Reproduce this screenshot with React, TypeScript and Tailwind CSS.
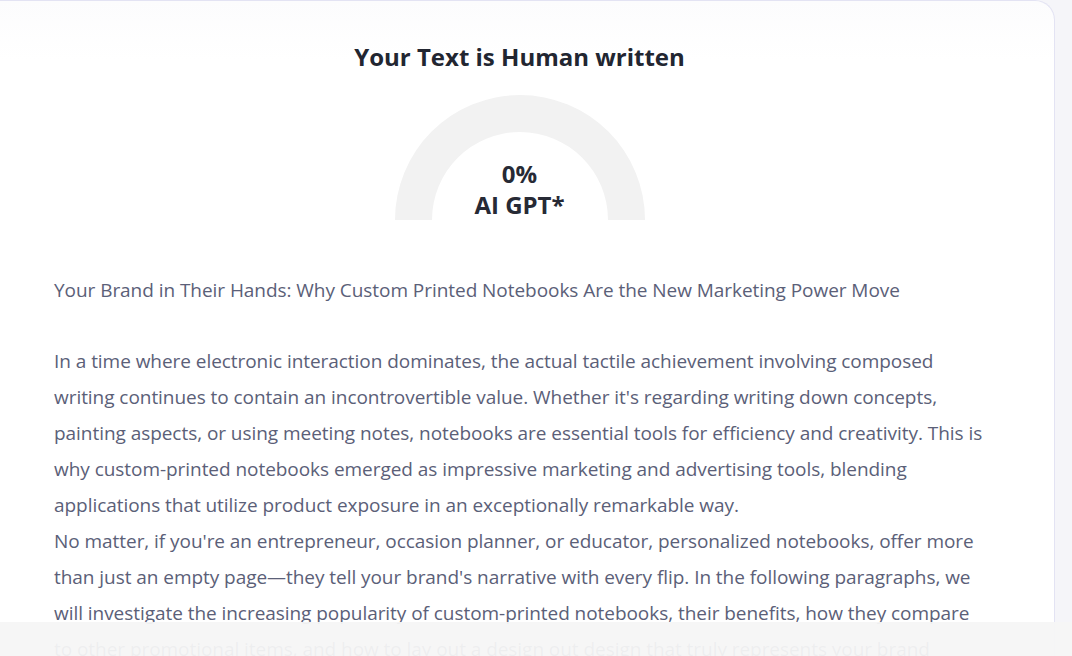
export default function App() {
  const p1 =
    "In a time where electronic interaction dominates, the actual tactile achievement involving composed writing continues to contain an incontrovertible value. Whether it's regarding writing down concepts, painting aspects, or using meeting notes, notebooks are essential tools for efficiency and creativity. This is why custom-printed notebooks emerged as impressive marketing and advertising tools, blending applications that utilize product exposure in an exceptionally remarkable way.";
  const p2 =
    "No matter, if you're an entrepreneur, occasion planner, or educator, personalized notebooks, offer more than just an empty page\u2014they tell your brand's narrative with every flip. In the following paragraphs, we will investigate the increasing popularity of custom-printed notebooks, their benefits, how they compare to other promotional items, and how to lay out a design out design that truly represents your brand identity.";
  return (
    <div
      className="relative h-[656px] w-[1072px] overflow-hidden bg-[#f5f5f9]"
      style={{ fontFamily: "'Open Sans', 'Noto Sans', sans-serif" }}
    >
      <div className="ml-[-20px] mr-[17px] h-[700px] rounded-tr-[20px] border-t border-r border-[#e3e3f3] bg-white bg-gradient-to-b from-[#fcfcfd] to-white to-[60px] pl-[74px] pt-[40px]">
        <div className="flex w-[931px] flex-col items-center">
          <h1 className="text-[24px] font-bold leading-[32px] text-[#222631]">
            Your Text is Human written
          </h1>
          <div className="relative mt-[22px] h-[125px] w-[250px]">
            <svg width="250" height="125" viewBox="0 0 250 125" className="absolute inset-0">
              <path d="M0 125 A125 125 0 0 1 250 125 L213 125 A88 88 0 0 0 37 125 Z" fill="#f2f2f2" />
            </svg>
            <div className="absolute inset-x-0 bottom-0 text-center text-[24px] font-bold leading-[31px] text-[#272a35]">
              <div>0%</div>
              <div>AI GPT*</div>
            </div>
          </div>
        </div>
        <div className="mt-[52px] w-[937px] text-[19px] leading-[36px] tracking-[-0.05px] text-[#5b6078]">
          <p>Your Brand in Their Hands: Why Custom Printed Notebooks Are the New Marketing Power Move</p>
          <p className="mt-[35px]">{p1}</p>
          <p>{p2}</p>
        </div>
      </div>
      <div className="absolute inset-x-0 bottom-0 h-[34px] bg-[#f6f6f6]/95"></div>
    </div>
  );
}
